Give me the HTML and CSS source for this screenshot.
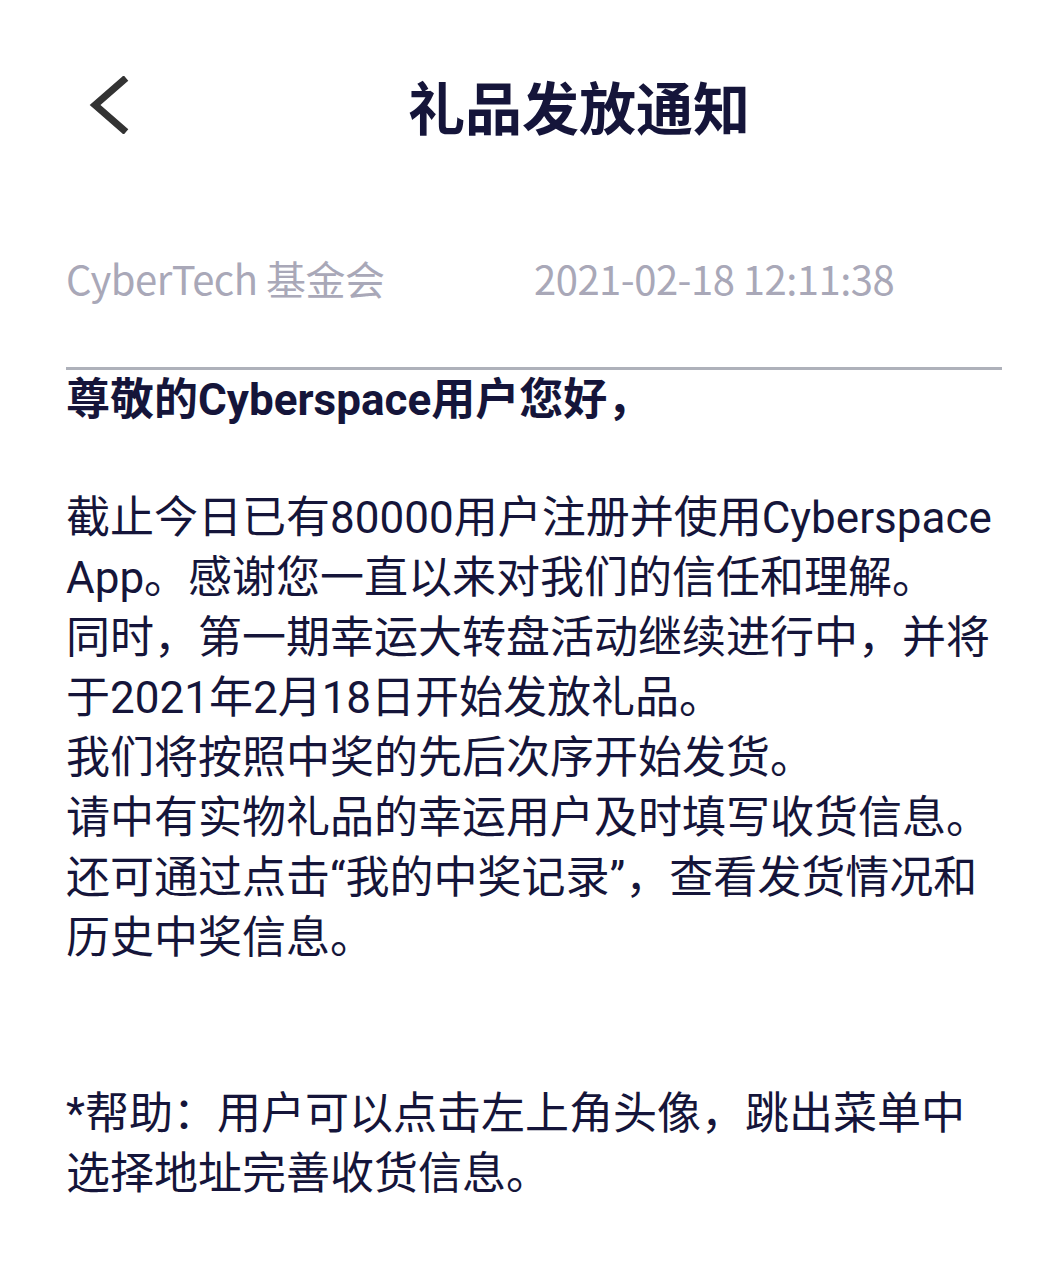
FILE: index.html
```html
<!DOCTYPE html>
<html lang="zh-CN">
<head>
    <meta charset="UTF-8">
    <meta name="viewport" content="width=device-width, initial-scale=1.0">
    <title>礼品发放通知</title>
    <link rel="stylesheet" href="styles.css">
</head>
<body>
    <div class="page">
        <div class="header">
            <button class="back" aria-label="返回">
                <svg width="40" height="58" viewBox="0 0 40 58">
                    <polyline points="37,2 6,29 37,56" fill="none" stroke="#333333" stroke-width="7" stroke-linejoin="miter"/>
                </svg>
            </button>
            <h1 class="title">礼品发放通知</h1>
        </div>

        <div class="meta">
            <span>CyberTech 基金会</span>
            <span>2021-02-18 12:11:38</span>
        </div>

        <div class="notice">
            <p class="greeting">尊敬的Cyberspace用户您好，</p>
            <p class="body">截止今日已有80000用户注册并使用Cyberspace App。感谢您一直以来对我们的信任和理解。<br>同时，第一期幸运大转盘活动继续进行中，并将于2021年2月18日开始发放礼品。<br>我们将按照中奖的先后次序开始发货。<br>请中有实物礼品的幸运用户及时填写收货信息。<br>还可通过点击“我的中奖记录”，查看发货情况和历史中奖信息。</p>
            <p class="help">*帮助：用户可以点击左上角头像，跳出菜单中选择地址完善收货信息。</p>
        </div>
    </div>
</body>
</html>
```

FILE: styles.css
```css
body {
    margin: 0;
    background: #ffffff;
    font-family: Roboto, "Noto Sans CJK SC", sans-serif;
    color: #15153a;
}
.page {
    padding: 0 60px 0 66px;
}
.header {
    display: flex;
    align-items: center;
    height: 110px;
    margin-top: 50px;
}
.back {
    width: 90px;
    height: 110px;
    padding: 0 0 0 23px;
    border: none;
    background: none;
    cursor: pointer;
    display: flex;
    align-items: center;
}
.title {
    flex: 1;
    margin: 0;
    text-align: center;
    font-family: "Noto Sans CJK SC", sans-serif;
    font-size: 57px;
    font-weight: 700;
    line-height: 110px;
    color: #15153a;
}
.meta {
    display: grid;
    grid-template-columns: 1fr 1fr;
    margin-top: 88px;
    font-family: "Noto Sans CJK SC", sans-serif;
    font-size: 40px;
    letter-spacing: -0.5px;
    line-height: 60px;
    color: #a9a8b8;
}
.notice {
    margin-top: 59px;
    border-top: 3px solid #aeb1ba;
    font-size: 44px;
    line-height: 60px;
}
.notice p {
    margin: 0;
}
.greeting {
    font-weight: 700;
}
.body {
    margin-top: 58px !important;
}
.help {
    margin-top: 116px !important;
}
```
